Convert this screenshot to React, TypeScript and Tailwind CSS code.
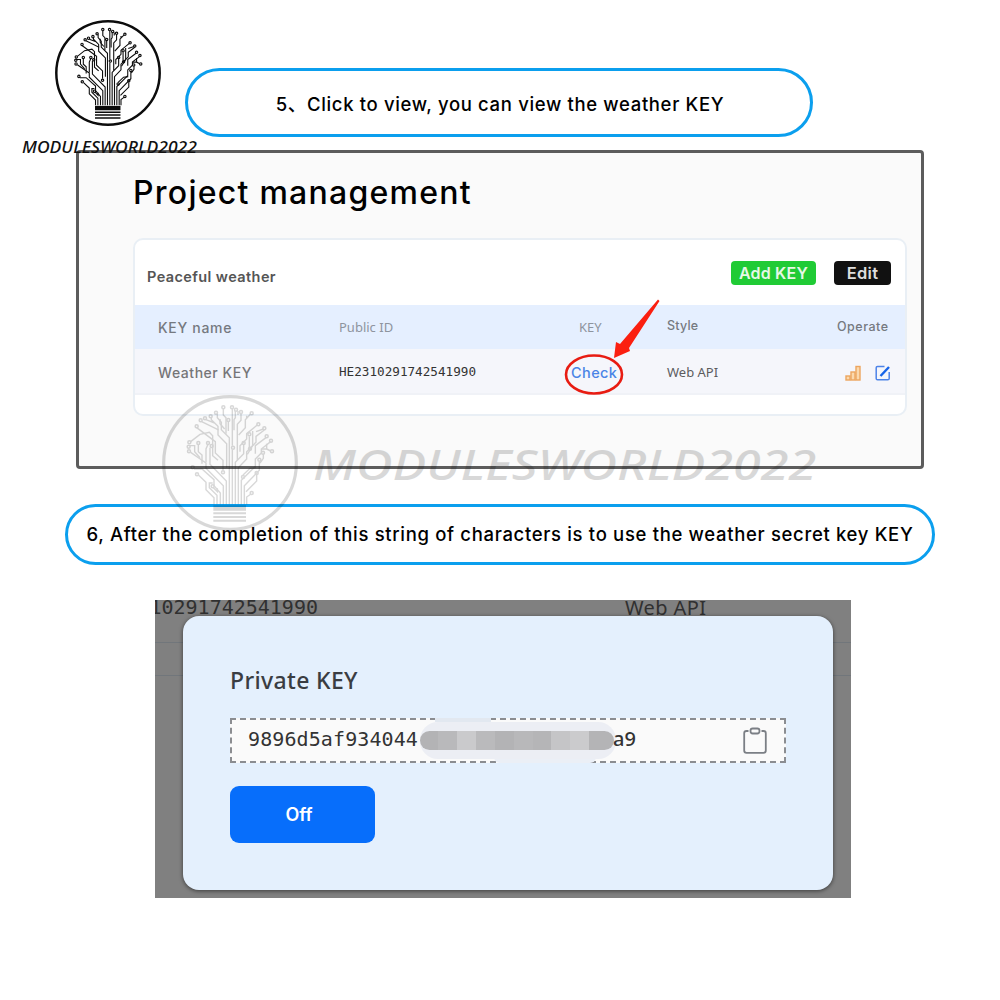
import React, { ReactNode } from 'react'

type LogoProps = {
  className?: string
}

const nodes = [
  [220, 81], [246, 81], [273, 95], [305, 99], [258, 88], [198, 97], [182, 108], [165, 114],
  [152, 120], [140, 138], [118, 186], [117, 213], [145, 188], [185, 197], [174, 188], [128, 261],
  [141, 282], [249, 202], [219, 276], [281, 188], [235, 119], [325, 132], [343, 144], [350, 168],
  [363, 181], [366, 213], [339, 217], [328, 238], [279, 290], [320, 278], [305, 338], [188, 318],
  [300, 205], [116, 199], [298, 162]
]

const branches = [
  'M192 372V352L168 328V306L146 285',
  'M201 372V345L178 322V308H188M190 322L202 334V324',
  'M211 372V338L192 316V298L156 266H132',
  'M220 372V316L168 264V248L122 216',
  'M229 372V302L180 252V202M168 246V206L174 192',
  'M238 372V172L214 148V126L202 112V100',
  'M247 372V208M247 196V86',
  'M256 372V246L281 220V194M262 240V132L273 120V100',
  'M265 372V262L290 236V214L318 186V168L343 149',
  'M274 372V300L316 258V236L334 218V206L362 184',
  'M283 372V316L328 270V244',
  'M290 372V350L303 341M279 284L300 264L318 262M288 334L320 302V284',
  'M219 270V240L196 218V184L140 142',
  'M230 262V190L204 164V148L155 124',
  'M204 240L188 226V166L178 156L150 162L122 184',
  'M156 250V224L145 214V194M150 232L134 214V196H118',
  'M204 150V138L184 118V110M194 128L168 118',
  'M220 86V104L228 112V160M224 146L210 130V116',
  'M235 125V152M256 92V112L252 118V150M264 104V92',
  'M301 102L286 118V142L266 164M290 114V106',
  'M270 214V196L290 176V160L322 134M298 168V200M308 152V196L292 222',
  'M316 220V196L348 172M318 154L340 146M350 190V206L362 212M340 222V234L330 248M350 206L336 206'
]

// Circuit tree growing out of a bulb socket
const TreeLogo = ({ className }: LogoProps) => {
  return (
    <svg className={className} viewBox="36 44 408 408" fill="none" stroke="currentColor">
      <circle cx="240" cy="248" r="199" strokeWidth="9.5" />
      <g strokeWidth="4.2">
        {branches.map((d) => (
          <path key={d} d={d} />
        ))}
      </g>
      <g strokeWidth="4.5">
        {nodes.map(([x, y]) => (
          <circle key={`${x}-${y}`} cx={x} cy={y} r="4.5" />
        ))}
      </g>
      <path d="M190 383H288" strokeWidth="17" />
      <path d="M190 399H288M190 410H288M190 421H288" strokeWidth="6" />
    </svg>
  )
}

const Step = ({ children, className }: { children: ReactNode; className: string }) => {
  return (
    <div
      className={`flex items-center justify-center rounded-full border-3 border-[#0b9fee] font-medium text-black whitespace-nowrap ${className}`}
    >
      {children}
    </div>
  )
}

const BarsIcon = () => (
  <svg className="w-4 h-4" viewBox="0 0 16 16" fill="#fbd9ae" stroke="#eda55e" strokeWidth="1.4">
    <rect x="1" y="11" width="4" height="4" />
    <rect x="6" y="7" width="4" height="8" />
    <rect x="11" y="1.5" width="4" height="13.5" />
  </svg>
)

const EditIcon = () => (
  <svg className="w-4 h-4" viewBox="0 0 16 16" fill="none" stroke="#4d83e8">
    <path d="M9.5 1.5H2.5Q1.2 1.5 1.2 2.8V13.5Q1.2 14.8 2.5 14.8H12.8Q14.2 14.8 14.2 13.5V7" strokeWidth="1.5" />
    <path d="M5.5 11L14 2" strokeWidth="2.4" stroke="#1764e8" />
  </svg>
)

const ClipboardIcon = () => (
  <svg className="w-6 h-7" viewBox="0 0 24 28" fill="none" stroke="#7b7f85" strokeWidth="1.8">
    <path d="M5.5 4H3.5Q1.2 4 1.2 6.3V23.5Q1.2 25.8 3.5 25.8H20.5Q22.8 25.8 22.8 23.5V6.3Q22.8 4 20.5 4H18.5" />
    <rect x="7.5" y="1.5" width="9" height="5" rx="2.2" />
  </svg>
)

const ProjectPanel = () => {
  return (
    <div className="ml-[76px] mt-[13px] w-[848px] h-[319px] rounded-[4px] border-3 border-[#5c5c5c] bg-[#fafafa] pl-[54px]">
      <h1 className="mt-[18px] h-[67px] text-[32px] leading-[43px] font-medium tracking-[1.25px] text-black whitespace-nowrap">
        Project management
      </h1>
      <div className="w-[774px] h-[178px] rounded-[10px] border-2 border-[#e9eff5] bg-white">
        <div className="flex h-[65px] pl-[12px] pr-[14px]">
          <div className="mt-[27px] text-[14.5px] leading-5 font-semibold tracking-[0.4px] text-[#555]">
            Peaceful weather
          </div>
          <button className="ml-auto mt-[21px] w-[85px] h-6 rounded-[4px] bg-[#20cb35] text-[16px] leading-6 font-semibold tracking-[0.2px] text-[#e6f8e6] whitespace-nowrap">
            Add KEY
          </button>
          <button className="ml-[18px] mt-[21px] w-[57px] h-6 rounded-[4px] bg-[#111] text-[16.5px] leading-6 font-semibold tracking-[0.3px] text-[#ddd]">
            Edit
          </button>
        </div>
        <div className="grid grid-cols-[181px_240px_88px_170px_1fr] h-11 items-center bg-[#e5efff] pl-[23px] text-[14px] font-medium text-[#757980]">
          <div className="tracking-[0.7px]">KEY name</div>
          <div className="pt-0.5 font-['Noto_Sans'] text-[13px] font-normal text-[#8e949e]">Public ID</div>
          <div className="pt-0.5 font-['Noto_Sans'] text-[13px] font-normal text-[#8e949e]">KEY</div>
          <div className="text-[12.5px] tracking-[0.2px] -mt-0.5">Style</div>
          <div className="text-[12.5px] tracking-[0.5px]">Operate</div>
        </div>
        <div className="grid grid-cols-[181px_228px_100px_178px_1fr] h-[46px] items-center border-b-2 border-[#f0f2f7] bg-[#f5f6fb] pl-[23px] pt-[3px] text-[14px] font-medium text-[#757578]">
          <div className="tracking-[0.55px]">Weather KEY</div>
          <div className="font-['DejaVu_Sans_Mono'] text-[12.65px] font-normal text-[#333]">HE2310291742541990</div>
          <div className="relative">
            <span className="ml-1 text-[14.5px] tracking-[0.4px] text-[#4a84e6]">Check</span>
            <svg className="absolute -left-1 -top-[66px] w-[100px] h-[110px]" viewBox="0 0 100 110" fill="none">
              <ellipse cx="31" cy="78.5" rx="28" ry="19" stroke="#e81c12" strokeWidth="2.6" />
              <path d="M95 3.5L96.5 5L66 52L67 55L51 62L53 46L57 48Z" fill="#fb1f10" />
            </svg>
          </div>
          <div className="font-['Noto_Sans'] text-[13px] font-normal text-[#5c5c5e]">Web API</div>
          <div className="flex gap-[14px]">
            <BarsIcon />
            <EditIcon />
          </div>
        </div>
      </div>
    </div>
  )
}

// Smudge and mosaic that hide the middle of the key, rubbing out bits of the dashed frame
const MaskedKey = () => {
  return (
    <>
      <div className="absolute left-[203px] -top-[2px] w-[56px] h-[4px] bg-[#e2e8f0]" />
      <div className="absolute left-[262px] top-[33px] w-[102px] h-[10px] rounded-b-md bg-[#ebeff6]" />
      <div className="absolute left-[188px] top-[2px] flex w-[196px] h-[37px] items-center rounded-[18px] bg-[#eceef4]">
        <div className="flex w-[194px] h-[19px] overflow-hidden rounded-[10px]">
          <div className="w-[18px] bg-[#b3b3b5]" />
          <div className="w-[19px] bg-[#b9b9bb]" />
          <div className="w-[19px] bg-[#cacacc]" />
          <div className="w-[19px] bg-[#bababc]" />
          <div className="w-[19px] bg-[#b3b3b5]" />
          <div className="w-[19px] bg-[#b8b8ba]" />
          <div className="w-[18px] bg-[#b5b5b7]" />
          <div className="w-[19px] bg-[#c5c5c7]" />
          <div className="w-[19px] bg-[#cbcbcd]" />
          <div className="w-[25px] bg-[#b4b4b6]" />
        </div>
      </div>
    </>
  )
}

const KeyDialog = () => {
  return (
    <div className="relative ml-[155px] mt-[35px] w-[696px] h-[298px] overflow-hidden bg-[#808080] pt-4 pl-7">
      {/* Dimmed table behind the dialog */}
      <div className="absolute right-[533px] -top-[5px] font-['DejaVu_Sans_Mono'] text-[20px] leading-6 text-[#303030]">
        10291742541990
      </div>
      <div className="absolute left-[470px] -top-[4px] font-['Noto_Sans'] text-[20px] leading-6 tracking-[0.4px] text-[#303030]">
        Web API
      </div>
      <div className="absolute left-0 top-[42px] w-full h-[34px] border-y border-[#71767b]" />

      <div className="relative w-[650px] h-[274px] rounded-2xl bg-[#e4f0fd] pt-[47px] pl-[47px] shadow-[0_1px_4px_rgba(0,0,0,0.55)]">
        <h2 className="h-[55px] font-['Noto_Sans'] text-[23px] leading-[34px] font-medium tracking-[0.35px] text-[#3a3d42]">
          Private KEY
        </h2>
        <div className="relative flex w-[556px] h-[45px] items-center border-2 border-dashed border-[#8b8d91] bg-[#fafafa] pl-[16px] pr-[17px] font-['DejaVu_Sans_Mono'] text-[20px] tracking-[0.1px] text-[#333]">
          <span className="-mt-1">9896d5af934044</span>
          <MaskedKey />
          <span className="relative ml-[195px] -mt-1 font-['Noto_Sans'] font-medium">a9</span>
          <div className="ml-auto">
            <ClipboardIcon />
          </div>
        </div>
        <button className="mt-[23px] w-[145px] h-[57px] rounded-[9px] bg-[#076efb] pr-[7px] text-[18px] font-semibold text-white">
          Off
        </button>
      </div>
    </div>
  )
}

const App = () => {
  return (
    <div className="relative w-[1000px] h-[1000px] overflow-hidden bg-white pt-[68px] font-['Inter',sans-serif]">
      <Step className="ml-[185px] w-[628px] h-[69px] pt-[5px] pl-[2px] text-[18.5px] tracking-[0.65px]">
        <span className="font-['Inter','Noto_Sans_CJK_SC',sans-serif]">
          5、Click to view, you can view the weather KEY
        </span>
      </Step>
      <ProjectPanel />
      <Step className="ml-[65px] mt-[35px] w-[870px] h-[61px] pt-px text-[18.5px] tracking-[0.67px]">
        6, After the completion of this string of characters is to use the weather secret key KEY
      </Step>
      <KeyDialog />

      {/* Shop branding laid over the page */}
      <TreeLogo className="absolute left-[55px] top-5 w-[106px] h-[106px] text-[#0c0c0c]" />
      <div className="absolute left-[22px] top-[137px] origin-left scale-x-[1.13] font-['Noto_Sans'] text-[15.5px] leading-5 font-medium italic text-[#111]">
        MODULESWORLD2022
      </div>
      <TreeLogo className="absolute left-[162px] top-[395px] w-[136px] h-[136px] text-black opacity-15" />
      <div className="absolute left-[313px] top-[439px] origin-left scale-x-[1.2] font-['Noto_Sans'] text-[42px] leading-[50px] font-medium italic text-black opacity-15">
        MODULESWORLD2022
      </div>
    </div>
  )
}

export default App
